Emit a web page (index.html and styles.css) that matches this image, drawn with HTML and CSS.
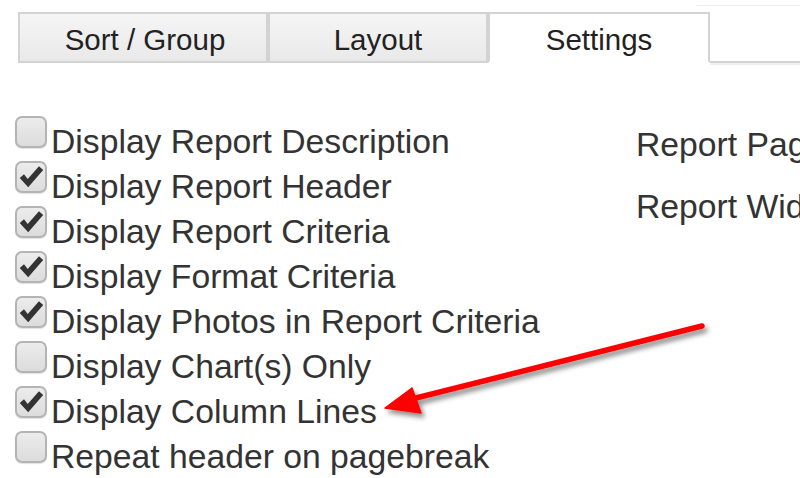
FILE: index.html
```html
<!DOCTYPE html>
<html lang="en">

<head>
  <meta charset="UTF-8">
  <meta name="viewport" content="width=device-width, initial-scale=1.0">
  <title>Report Settings</title>
  <link rel="stylesheet" href="styles.css">
</head>

<body>

  <div class="tabs">
    <div class="tab">Sort / Group</div>
    <div class="tab">Layout</div>
    <div class="tab active">Settings</div>
    <div class="tab-rest"></div>
  </div>

  <main class="panel">
    <ul class="options">
      <li><span class="box"></span>Display Report Description</li>
      <li><span class="box checked"><svg viewBox="0 0 32 32"><path d="M4 17 L8.5 13 L12.5 18 L24.5 4.5 L29 8.5 L13 27 Z"/></svg></span>Display Report Header</li>
      <li><span class="box checked"><svg viewBox="0 0 32 32"><path d="M4 17 L8.5 13 L12.5 18 L24.5 4.5 L29 8.5 L13 27 Z"/></svg></span>Display Report Criteria</li>
      <li><span class="box checked"><svg viewBox="0 0 32 32"><path d="M4 17 L8.5 13 L12.5 18 L24.5 4.5 L29 8.5 L13 27 Z"/></svg></span>Display Format Criteria</li>
      <li><span class="box checked"><svg viewBox="0 0 32 32"><path d="M4 17 L8.5 13 L12.5 18 L24.5 4.5 L29 8.5 L13 27 Z"/></svg></span>Display Photos in Report Criteria</li>
      <li><span class="box"></span>Display Chart(s) Only</li>
      <li><span class="box checked"><svg viewBox="0 0 32 32"><path d="M4 17 L8.5 13 L12.5 18 L24.5 4.5 L29 8.5 L13 27 Z"/></svg></span>Display Column Lines</li>
      <li><span class="box"></span>Repeat header on pagebreak</li>
    </ul>

    <div class="report-props">
      <div class="prop">Report Page Size</div>
      <div class="prop">Report Width</div>
    </div>
  </main>

  <!-- annotation arrow -->
  <svg class="arrow" width="800" height="478" viewBox="0 0 800 478">
    <defs>
      <filter id="shadow" x="-10%" y="-20%" width="130%" height="160%">
        <feDropShadow dx="3" dy="4" stdDeviation="2.5" flood-color="#000" flood-opacity="0.45"/>
      </filter>
    </defs>
    <g filter="url(#shadow)" fill="#ff0000" stroke="#ff0000">
      <line x1="702" y1="326" x2="408" y2="400" stroke-width="5.5" stroke-linecap="round"/>
      <polygon points="385,408 412,388 421,413" stroke-width="1.5" stroke-linejoin="round"/>
    </g>
  </svg>

</body>
</html>
```

FILE: styles.css
```css
body {
  font-family: 'Liberation Sans', Arial, sans-serif;
  background-color: #fff;
  margin: 0;
  padding: 0;
  width: 800px;
  height: 478px;
  overflow: hidden;
  position: relative;
}

.tabs {
  display: flex;
  margin-top: 12px;
  padding-left: 18px;
  height: 51px;
}

.tab {
  box-sizing: border-box;
  height: 51px;
  border: 2px solid #d3d3d3;
  background: linear-gradient(#f5f5f5, #e9e9e9);
  color: #222;
  font-size: 29.5px;
  line-height: 44px;
  padding-top: 4px;
  text-align: center;
  flex: none;
}

.tab:nth-child(1) {
  width: 250px;
  padding-left: 4px;
}

.tab:nth-child(2) {
  width: 220px;
}

.tab.active {
  width: 222px;
  background: #fff;
  border-bottom-color: #fff;
}

.tab-rest {
  flex: 1;
  position: relative;
  border-bottom: 2px solid #d3d3d3;
  box-shadow: 0 2px 0 #f0f0f0;
}

.tab-rest::before {
  content: "";
  position: absolute;
  left: -13px;
  right: 0;
  top: -7px;
  border-top: 1px solid #ececec;
}

.panel {
  display: flex;
  padding-top: 56px;
}

.options {
  list-style-type: none;
  margin: 0;
  padding: 0 0 0 15px;
  width: 621px;
  flex: none;
}

.options li {
  display: flex;
  align-items: flex-start;
  gap: 4px;
  height: 45px;
  line-height: 45px;
  font-size: 33.7px;
  color: #333;
  white-space: nowrap;
}

.box {
  box-sizing: border-box;
  width: 32px;
  height: 32px;
  margin-top: -3px;
  flex: none;
  border: 2px solid #b4b4b4;
  border-radius: 7px;
  background: linear-gradient(#ececec, #dcdcdc);
  box-shadow: 0 1px 1px rgba(0, 0, 0, 0.12);
  position: relative;
}

.box svg {
  position: absolute;
  left: -1px;
  top: -1px;
  width: 30px;
  height: 30px;
  fill: #333;
}

.report-props {
  padding-top: 3px;
  display: flex;
  flex-direction: column;
  gap: 17px;
}

.prop {
  font-size: 33.7px;
  line-height: 45px;
  color: #333;
  white-space: nowrap;
}

.arrow {
  position: absolute;
  left: 0;
  top: 0;
  pointer-events: none;
}
```
